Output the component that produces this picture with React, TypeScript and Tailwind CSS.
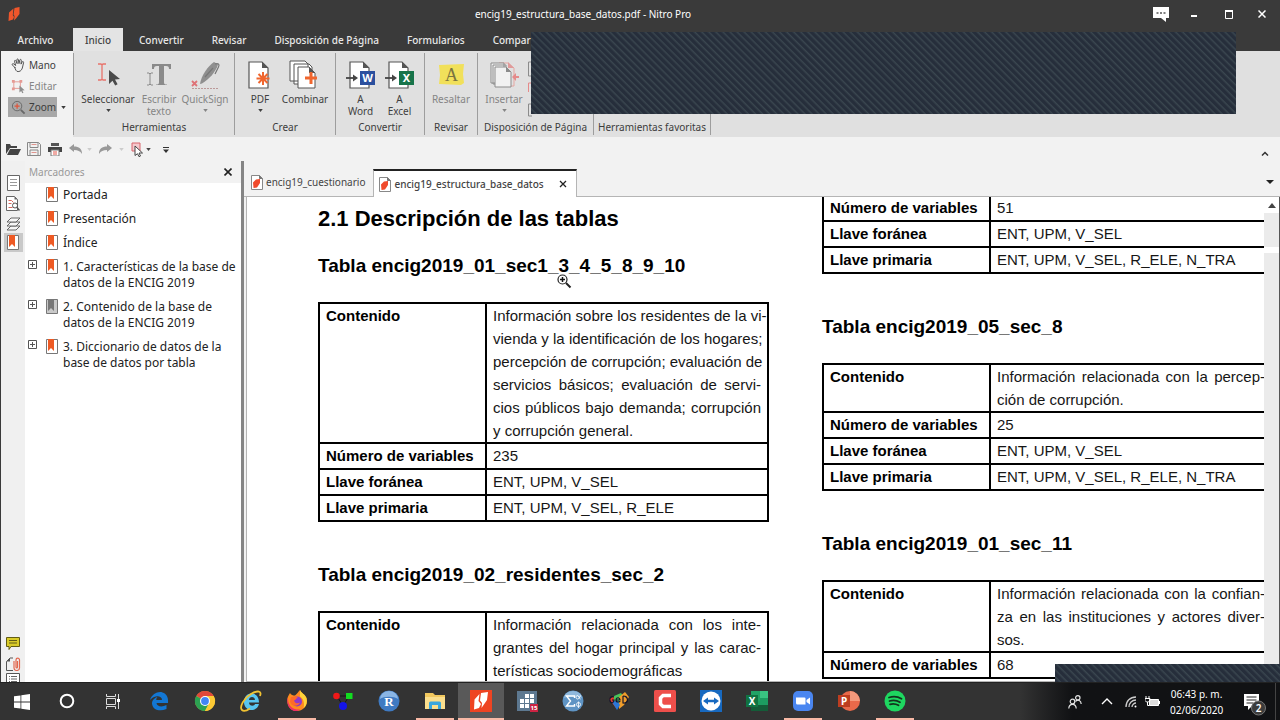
import type { ReactNode } from "react";

const hatch =
  "bg-[#262e3b] bg-[repeating-linear-gradient(45deg,#262e3b_0px,#262e3b_2px,#3a464f_4px,#262e3b_5px)]";

function NitroMark({ className, color = "#f0562b" }: { className?: string; color?: string }) {
  return (
    <svg viewBox="0 0 12 16" className={className} fill={color}>
      <path d="M6.500 2 11.500 1v7L8 12.500 6 14.500 6.500 10 5.500 8.500Z" />
      <path d="M1 6.500 5.500 2.500 4.800 9l1.200 2-1 2.500L.5 15Z" />
    </svg>
  );
}

function Caret({ className = "" }: { className?: string }) {
  return (
    <svg viewBox="0 0 6 4" className={`h-[3px] w-[5px] shrink-0 ${className}`}>
      <path d="M0 0h6L3 4Z" fill="currentColor" />
    </svg>
  );
}

function HandIcon() {
  return (
    <svg viewBox="0 0 16 16" className="h-[15px] w-[15px] shrink-0" fill="none" stroke="#4b4b4b" strokeLinecap="round" strokeLinejoin="round">
      <path d="M4 10 1.500 7.500c-.8-1 .5-2 1.400-1.200L5 8 3.700 3.600c-.3-1.200 1.200-1.600 1.600-.5L6.500 6 6.200 2c0-1.300 1.600-1.300 1.700 0L8.500 6l.9-3.800c.3-1.200 1.800-.8 1.600.4L10.700 6.500l1.200-2.300c.6-1 1.900-.3 1.500.8L12.600 8.500c-.5 3-1.600 6-5 6C5.500 14.500 4.800 12.500 4 10Z" />
    </svg>
  );
}

function EditIcon() {
  return (
    <svg viewBox="0 0 16 16" className="h-[15px] w-[15px] shrink-0" fill="none">
      <path d="M3 3h7v7H3Z" stroke="#e59a94" />
      <path d="M1 1h3v3H1ZM9 1h3v3H9ZM1 9h3v3H1Z" fill="#e59a94" />
      <path d="m9 7 5.500 5-2.500.2 1.300 2.500-1.200.6-1.300-2.500L9 14.500Z" fill="#8d8d8d" />
    </svg>
  );
}

function ZoomIcon() {
  return (
    <svg viewBox="0 0 16 16" className="h-[15px] w-[15px] shrink-0" fill="none">
      <circle cx="6.500" cy="6.500" r="5" stroke="#686868" />
      <path d="M6.500 3.800v5.400M3.800 6.500h5.400" stroke="#e0543a" strokeWidth="1.300" />
      <path d="m10.500 10.500 4 4" stroke="#686868" strokeWidth="2" />
    </svg>
  );
}

function SelectIcon() {
  return (
    <svg viewBox="0 0 32 32" className="h-8 w-8">
      <path d="M6 5h3l1 1 1-1h3M6 21h3l1-1 1 1h3M10 6v14" fill="none" stroke="#e8736b" strokeWidth="1.300" />
      <path d="m17 11 11 9-5 .6 2.600 4.600-2.400 1.300-2.700-4.700L17 25Z" fill="#4a4a4a" />
    </svg>
  );
}

function TypeIcon() {
  return (
    <svg viewBox="0 0 32 32" className="h-8 w-8">
      <path d="M9 5h19v5h-2c0-2-.5-3-3-3h-2v16c0 2 .5 2.500 3 2.500V26H13v-.5c2.500 0 3-.5 3-2.500V7h-2c-2.500 0-3 1-3 3H9Z" fill="#8a8a8a" />
      <path d="M4 14h2l1 1 1-1h2M4 26h2l1-1 1 1h2M7 15v10" fill="none" stroke="#8a8a8a" />
    </svg>
  );
}

function SignIcon() {
  return (
    <svg viewBox="0 0 32 32" className="h-8 w-8">
      <path d="M11 25c1-8 8-18 14-22l4 2.500c-2 7-9 15-16 19Z" fill="#8f8f8f" />
      <path d="M26 5c3-1 5 0 3.500 3L26 15M16 18l8-9" fill="none" stroke="#777" strokeWidth="1.200" />
      <path d="m3 22 5 5m0-5-5 5" stroke="#df7277" strokeWidth="1.800" />
      <path d="M3 29.500h26" stroke="#b99" strokeDasharray="2 1" />
    </svg>
  );
}

function PageShape() {
  return (
    <>
      <path d="M5 3h13l6 6v20H5Z" fill="#fff" stroke="#555" strokeWidth="1.200" />
      <path d="M18 3v6h6Z" fill="#555" />
    </>
  );
}

function PdfIcon() {
  return (
    <svg viewBox="0 0 32 32" className="h-8 w-8">
      <PageShape />
      <path d="M19 13v13M12.500 19.500h13M14.500 15l9 9m0-9-9 9" stroke="#f0662e" strokeWidth="2" />
    </svg>
  );
}

function CombineIcon() {
  return (
    <svg viewBox="0 0 32 32" className="h-8 w-8">
      <path d="M1 2h15l3 3v17H1ZM5 5h15l3 3v17H5Z" fill="#fff" stroke="#555" />
      <path d="M9 8h11l6 6v15H9Z" fill="#fff" stroke="#555" />
      <path d="M20 8v6h6Z" fill="#555" />
      <path d="M22 13v12M16 19h12" stroke="#f0662e" strokeWidth="3" />
    </svg>
  );
}

function ExportIcon({ letter, color }: { letter: string; color: string }) {
  return (
    <svg viewBox="0 0 32 32" className="h-8 w-8 overflow-visible">
      <PageShape />
      <path d="M1 19h10" stroke="#444" strokeWidth="1.800" />
      <path d="m8 15.500 5 3.500-5 3.500Z" fill="#444" />
      <path d="M15 12h15v14H15Z" fill={color} />
      <text x="22.500" y="23" textAnchor="middle" fontFamily="Noto Sans, sans-serif" fontWeight="700" fontSize="11" fill="#fff">
        {letter}
      </text>
    </svg>
  );
}

function HighlightIcon() {
  return (
    <svg viewBox="0 0 32 32" className="h-8 w-8">
      <path d="M4 6 29 5l-1 10 1 9-3 2-22-1 1-9Z" fill="#f1e05a" />
      <text x="16.500" y="22" textAnchor="middle" fontFamily="Liberation Serif, serif" fontSize="18" fill="#7b7440">
        A
      </text>
    </svg>
  );
}

function InsertIcon() {
  return (
    <svg viewBox="0 0 32 32" className="h-8 w-8">
      <path d="M11 4h9l6 5v18h-4" fill="none" stroke="#e5a5a0" />
      <path d="M20 3v6h6Z" fill="#e09a9a" />
      <path d="M3 4h13v20H3ZM5 6h13v19H5Z" fill="#f1f1f1" stroke="#8b8b8b" />
      <path d="M7 8h11l5 5v15H7Z" fill="#f1f1f1" stroke="#8b8b8b" />
      <path d="M18 8v5h5Z" fill="#8b8b8b" />
      <path d="m24 18 4-4v3h3v2h-3v3Z" fill="#e58a8a" />
    </svg>
  );
}

function RibbonButton({ icon, label, second, caret, muted, width }: { icon: ReactNode; label: string; second?: string; caret?: boolean; muted?: boolean; width: string }) {
  return (
    <button type="button" className={`flex flex-col items-center pt-1.5 leading-3 ${width} ${muted ? "text-[#858585]" : "text-[#3f3f3f]"}`}>
      {icon}
      <span className="mt-0.5">{label}</span>
      {second && <span>{second}</span>}
      {caret && <Caret className="mt-1" />}
    </button>
  );
}

function RibbonGroup({ title, width, children }: { title: string; width: string; children?: ReactNode }) {
  return (
    <section className={`flex shrink-0 flex-col justify-between py-0.5 ${width}`}>
      <div className="flex h-[66px] justify-center">{children}</div>
      <h2 className="pb-0.5 text-center leading-3 whitespace-nowrap">{title}</h2>
    </section>
  );
}

function Divider() {
  return <div className="my-0.5 w-px shrink-0 bg-[#9d9d9d]" />;
}

function TitleBar() {
  return (
    <header className="flex h-7 shrink-0 items-center bg-[#3a3a3a] px-2 text-white">
      <div className="flex-1">
        <NitroMark className="h-4 w-3" />
      </div>
      <h1 className="pr-[114px] text-[10px]">encig19_estructura_base_datos.pdf - Nitro Pro</h1>
      <div className="flex flex-1 items-center justify-end">
        <button type="button" aria-label="Comentarios" className="mr-[22px]">
          <svg viewBox="0 0 16 15" className="h-[15px] w-4">
            <path d="M0 0h16v11h-3v4l-5-4H0Z" fill="#fff" />
            <path d="M3.500 6h2m1.500 0h2m1.500 0h2" stroke="#555" strokeWidth="1.500" />
          </svg>
        </button>
        <button type="button" aria-label="Minimizar" className="mr-7">
          <svg viewBox="0 0 6 10" className="h-[10px] w-[6px]"><path d="M0 7h6" stroke="#fff" strokeWidth="2" /></svg>
        </button>
        <button type="button" aria-label="Maximizar" className="mr-[25px]">
          <svg viewBox="0 0 8 9" className="h-[9px] w-2"><path d="M.5 1v7.500h7V1" fill="none" stroke="#fff" /><path d="M0 1h8" stroke="#fff" strokeWidth="2" /></svg>
        </button>
        <button type="button" aria-label="Cerrar" className="mr-[6px]">
          <svg viewBox="0 0 8 8" className="h-2 w-2"><path d="m.5.5 7 7m0-7-7 7" stroke="#fff" strokeWidth="1.500" /></svg>
        </button>
      </div>
    </header>
  );
}

const menus = ["Convertir", "Revisar", "Disposición de Página", "Formularios", "Compar"];

function Menu() {
  return (
    <nav className="flex h-[23px] shrink-0 items-stretch overflow-hidden bg-[#3a3a3a] text-[10px] font-medium whitespace-nowrap text-[#e8e8e8]">
      <button type="button" className="w-[73px] pt-0.5 pr-0.5">Archivo</button>
      <button type="button" className="mr-0.5 w-[50px] bg-[#e4e4e4] pt-0.5 text-[#444]">Inicio</button>
      {menus.map((m) => (
        <button key={m} type="button" className="px-3.5 pt-0.5">{m}</button>
      ))}
    </nav>
  );
}

function Ribbon() {
  return (
    <div className="flex h-[86px] shrink-0 border-l border-[#3a3a3a] bg-[#f2f2f2] text-[10px] text-[#3c3c3c]">
      <div className="flex w-[72px] shrink-0 flex-col items-start gap-px pt-1 pl-[7px]">
        <button type="button" className="flex h-5 items-center gap-[3px] px-[3px]"><HandIcon />Mano</button>
        <button type="button" className="flex h-5 items-center gap-[3px] px-[3px] text-[#858585]"><EditIcon />Editar</button>
        <div className="flex items-center gap-1">
          <button type="button" className="flex h-5 w-[49px] items-center gap-[3px] bg-[#a8a8a8] px-[3px]"><ZoomIcon />Zoom</button>
          <Caret />
        </div>
      </div>
      <div className="flex min-w-0 flex-1 overflow-hidden bg-[#e0e0e0]">
        <Divider />
        <RibbonGroup title="Herramientas" width="w-[160px]">
          <RibbonButton icon={<SelectIcon />} label="Seleccionar" caret width="w-[66px]" />
          <RibbonButton icon={<TypeIcon />} label="Escribir" second="texto" muted width="w-[36px]" />
          <RibbonButton icon={<SignIcon />} label="QuickSign" muted caret width="w-[56px]" />
        </RibbonGroup>
        <Divider />
        <RibbonGroup title="Crear" width="w-[100px]">
          <RibbonButton icon={<PdfIcon />} label="PDF" caret width="w-[40px]" />
          <RibbonButton icon={<CombineIcon />} label="Combinar" width="w-[50px]" />
        </RibbonGroup>
        <Divider />
        <RibbonGroup title="Convertir" width="w-[88px]">
          <RibbonButton icon={<ExportIcon letter="W" color="#2b4f9e" />} label="A" second="Word" width="w-[39px]" />
          <RibbonButton icon={<ExportIcon letter="X" color="#17744a" />} label="A" second="Excel" width="w-[39px]" />
        </RibbonGroup>
        <Divider />
        <RibbonGroup title="Revisar" width="w-[52px]">
          <RibbonButton icon={<HighlightIcon />} label="Resaltar" muted width="w-[50px]" />
        </RibbonGroup>
        <Divider />
        <RibbonGroup title="Disposición de Página" width="w-[115px]">
          <div className="flex flex-1 pl-[6px]">
            <RibbonButton icon={<InsertIcon />} label="Insertar" muted caret width="w-[40px]" />
            <svg viewBox="0 0 8 60" className="mt-1.5 h-[60px] w-2" fill="none">
              <path d="M4.500 3v14H8M4.500 45v12H8M4.500 3H8M4.500 45H8" stroke="#8b8b8b" />
              <path d="M4.500 33v-9H8" stroke="#e58a8a" />
            </svg>
          </div>
        </RibbonGroup>
        <Divider />
        <RibbonGroup title="Herramientas favoritas" width="w-[116px]" />
        <Divider />
      </div>
    </div>
  );
}

function QuickBar() {
  return (
    <div className="flex h-6 shrink-0 items-center border-l border-[#3a3a3a] bg-[#f2f2f2] pl-[5px] text-[#444]">
      <button type="button" aria-label="Abrir" className="mr-[6px]">
        <svg viewBox="0 0 15 12" className="h-3 w-[15px]"><path d="M0 11V1h4l1 2h6v2H4Z" fill="#444" /><path d="M4 6h11l-3 6H1Z" fill="#444" /></svg>
      </button>
      <button type="button" aria-label="Guardar" className="mr-[7px]">
        <svg viewBox="0 0 14 14" className="h-3.5 w-3.5" fill="none"><path d="M.5.5h11l2 2v11H.5Z" stroke="#888" /><path d="M3 .5h8v5H3ZM3 13V8h8v5" stroke="#888" /><path d="M4.500 2.500h5M4.500 10.500h5" stroke="#e0958e" /></svg>
      </button>
      <button type="button" aria-label="Imprimir" className="mr-[7px]">
        <svg viewBox="0 0 14 14" className="h-3.5 w-3.5"><path d="M3 1h8v3H3Z" fill="#555" /><path d="M0 5h14v5H0Z" fill="#444" /><path d="M3 8h8v6H3Z" fill="#fff" stroke="#777" /><path d="M5 10h4M5 12h4" stroke="#e2564a" /></svg>
      </button>
      <button type="button" aria-label="Deshacer" className="mr-[5px] text-[#999]">
        <svg viewBox="0 0 13 10" className="h-2.5 w-[13px]"><path d="m0 4 5-4v2.500c5 0 8 2 8 7.500-2-3-4-4-8-4V8Z" fill="currentColor" /></svg>
      </button>
      <Caret className="mr-[7px] text-[#ccc]" />
      <button type="button" aria-label="Rehacer" className="mr-[7px] text-[#999]">
        <svg viewBox="0 0 13 10" className="h-2.5 w-[13px]"><path d="M13 4 8 0v2.500c-5 0-8 2-8 7.500 2-3 4-4 8-4V8Z" fill="currentColor" /></svg>
      </button>
      <Caret className="mr-[7px] text-[#ccc]" />
      <button type="button" aria-label="Seleccionar" className="mr-[3px]">
        <svg viewBox="0 0 12 15" className="h-[15px] w-3"><path d="M1 1h8v8H1Z" fill="#f5c9cd" stroke="#d8646c" /><path d="m4 4 7.500 7H8l1.500 3-1.500.7-1.500-3L4 13.500Z" fill="#fff" stroke="#444" /></svg>
      </button>
      <Caret className="mr-3" />
      <button type="button" aria-label="Personalizar">
        <svg viewBox="0 0 6 7" className="h-[7px] w-1.5"><path d="M0 1.500h6" stroke="#333" /><path d="M0 3.500h6L3 7Z" fill="#333" /></svg>
      </button>
      <button type="button" aria-label="Contraer la cinta" className="mt-2 mr-[11px] ml-auto">
        <svg viewBox="0 0 8 5" className="h-[5px] w-2"><path d="m1 4.500 3-3 3 3" fill="none" stroke="#333" strokeWidth="1.500" /></svg>
      </button>
    </div>
  );
}

function BookmarkIcon({ gray }: { gray?: boolean }) {
  return (
    <svg viewBox="0 0 12 15" className="h-[15px] w-3 shrink-0">
      <path d="M.5.5h11v14H.5Z" fill={gray ? "#c9c9c9" : "#fff"} stroke="#777" />
      <path d="M2 0h6v12l-3-3-3 3Z" fill={gray ? "#777" : "#ee5a24"} />
    </svg>
  );
}

const bookmarks = [
  { lines: ["Portada"] },
  { lines: ["Presentación"] },
  { lines: ["Índice"] },
  { lines: ["1. Características de la base de", "datos de la ENCIG 2019"], nested: true },
  { lines: ["2. Contenido de la base de", "datos de la ENCIG 2019"], nested: true, gray: true },
  { lines: ["3. Diccionario de datos de la", "base de datos por tabla"], nested: true },
];

function Bookmarks() {
  return (
    <aside className="flex w-[216px] shrink-0 flex-col bg-white">
      <div className="flex h-[22px] items-center justify-between bg-[#f2f2f2] pr-[9px] pl-1">
        <h2 className="text-[10px] text-[#999]">Marcadores</h2>
        <button type="button" aria-label="Cerrar marcadores">
          <svg viewBox="0 0 8 8" className="h-2 w-2"><path d="m.5.5 7 7m0-7-7 7" stroke="#222" strokeWidth="1.600" /></svg>
        </button>
      </div>
      <ul className="flex flex-col gap-2 pt-1 text-[12px] leading-4 text-[#222]">
        {bookmarks.map((b) => (
          <li key={b.lines[0]} className="flex whitespace-nowrap">
            <span className="flex w-[21px] shrink-0 pt-px pl-[3px]">
              {b.nested && (
                <button type="button" aria-label="Expandir" className="self-start">
                  <svg viewBox="0 0 9 9" className="h-[9px] w-[9px]"><path d="M.5.5h8v8h-8ZM2 4.500h5M4.500 2v5" fill="none" stroke="#555" /></svg>
                </button>
              )}
            </span>
            <BookmarkIcon gray={b.gray} />
            <a href="#doc" className="pl-[5px]">
              {b.lines.map((l) => <span key={l} className="block">{l}</span>)}
            </a>
          </li>
        ))}
      </ul>
    </aside>
  );
}

function SideRail() {
  return (
    <div className="flex w-[25px] shrink-0 flex-col items-center overflow-hidden border-l border-[#3a3a3a] bg-[#f0f0f0] pt-[11px]">
      <button type="button" aria-label="Páginas" className="h-[21px]">
        <svg viewBox="0 0 13 16" className="h-4 w-[13px]"><path d="M.5.5h12v15H.5Z" fill="#fff" stroke="#666" /><path d="M3 4.500h7M3 7.500h7M3 10.500h7" stroke="#999" /></svg>
      </button>
      <button type="button" aria-label="Búsqueda" className="h-[21px]">
        <svg viewBox="0 0 14 15" className="h-[15px] w-3.5" fill="none"><path d="M.5.5h8l3 3v11H.5Z" fill="#fff" stroke="#666" /><path d="M8.500.5v3h3Z" fill="#666" /><path d="M2.500 4.500h3l2 2M2.500 7.500h3M2.500 11.500h4" stroke="#d6685e" /><circle cx="9" cy="9.500" r="2.500" stroke="#555" /><path d="m11 11.500 2.500 3" stroke="#555" strokeWidth="1.500" /></svg>
      </button>
      <button type="button" aria-label="Capas" className="h-[19px]">
        <svg viewBox="0 0 15 14" className="h-3.5 w-[15px]" fill="#f7f7f7" stroke="#666" strokeLinejoin="round"><path d="M5 9h9l-4 4H1Z" /><path d="M5 5h9l-4 4H1Z" /><path d="M5 1h9l-4 4H1Z" /></svg>
      </button>
      <button type="button" aria-label="Marcadores" className="flex h-[19px] w-[19px] items-center justify-center bg-[#c9c9c9]">
        <BookmarkIcon />
      </button>
      <button type="button" aria-label="Comentarios" className="mt-auto h-[21px]">
        <svg viewBox="0 0 14 13" className="h-[13px] w-3.5"><path d="M.5.5h13v9H5l-2 3v-3H.5Z" fill="#d9cb28" stroke="#625c14" /><path d="M3 3.500h8M3 6h8" stroke="#625c14" /></svg>
      </button>
      <button type="button" aria-label="Archivos adjuntos" className="h-[19px]">
        <svg viewBox="0 0 15 14" className="h-3.5 w-[15px]" fill="none"><path d="M7 13.500H.5v-9L4 1h3" stroke="#555" /><path d="M4 1v3.500H.5Z" fill="#555" /><path d="M8 4v7c0 3.300 5.500 3.300 5.500 0V3c0-2.500-3.500-2.500-3.500 0v7c0 1.300 1.500 1.300 1.500 0V4" stroke="#e2674e" strokeWidth="1.200" /></svg>
      </button>
      <button type="button" aria-label="Formularios" className="h-[9px] overflow-hidden">
        <svg viewBox="0 0 14 9" className="h-[9px] w-3.5"><path d="M.5 10V.5h13V10" fill="#fff" stroke="#555" /><path d="M3 3.500h1m1 0h6M3 6h1m1 0h6M3 8.500h1m1 0h6" stroke="#666" /></svg>
      </button>
    </div>
  );
}

function FileIcon() {
  return (
    <svg viewBox="0 0 12 15" className="h-[15px] w-3 shrink-0">
      <path d="M.5.5h8l3 3v11H.5Z" fill="#fff" stroke="#888" />
      <path d="M8.500.5v3h3" fill="#777" stroke="#777" />
      <path d="M2 7.500 4.500 5 5 4.500 9 4v4l-3 4.500L2.500 13Z" fill="#f04a2c" />
    </svg>
  );
}

type Row = { label: string; lines: string[] };

function VariableTable({ rows }: { rows: Row[] }) {
  return (
    <table className="w-[451px] table-fixed border-collapse text-[15px] leading-[23px] text-[#161616]">
      <tbody>
        {rows.map((r) => (
          <tr key={r.label} className="align-top">
            <th scope="row" className="h-[26px] w-[167px] border-2 border-black px-1.5 text-left font-bold whitespace-nowrap text-black">{r.label}</th>
            <td className="border-2 border-black px-1.5 whitespace-nowrap">
              {r.lines.map((l, i) => (
                <span key={l} className={i < r.lines.length - 1 ? "block [text-align-last:justify]" : "block"}>{l}</span>
              ))}
            </td>
          </tr>
        ))}
      </tbody>
    </table>
  );
}

function keys(count: string, primary?: string): Row[] {
  const rows = [{ label: "Número de variables", lines: [count] }];
  if (!primary) return rows;
  return [...rows, { label: "Llave foránea", lines: ["ENT, UPM, V_SEL"] }, { label: "Llave primaria", lines: [primary] }];
}

const sec1: Row[] = [
  {
    label: "Contenido",
    lines: [
      "Información sobre los residentes de la vi-",
      "vienda y la identificación de los hogares;",
      "percepción de corrupción; evaluación de",
      "servicios básicos; evaluación de servi-",
      "cios públicos bajo demanda; corrupción",
      "y corrupción general.",
    ],
  },
  ...keys("235", "ENT, UPM, V_SEL, R_ELE"),
];
const sec2: Row[] = [
  { label: "Contenido", lines: ["Información relacionada con los inte-", "grantes del hogar principal y las carac-", "terísticas sociodemográficas"] },
];
const sec8: Row[] = [
  { label: "Contenido", lines: ["Información relacionada con la percep-", "ción de corrupción."] },
  ...keys("25", "ENT, UPM, V_SEL, R_ELE, N_TRA"),
];
const sec11: Row[] = [
  { label: "Contenido", lines: ["Información relacionada con la confian-", "za en las instituciones y actores diver-", "sos."] },
  ...keys("68"),
];

function Heading({ children, first }: { children: ReactNode; first?: boolean }) {
  return <h3 className={`mb-6 text-[19px] leading-6 font-bold whitespace-nowrap ${first ? "mt-[22px]" : "mt-[41px]"}`}>{children}</h3>;
}

function Viewer() {
  return (
    <main className="flex min-w-0 flex-1 flex-col border-l-3 border-[#858585] bg-[#f2f2f2]">
      <div className="flex h-9 shrink-0 items-end border-b border-[#b5b5b5] pl-[7px] text-[10px] text-[#444]">
        <button type="button" className="flex h-7 items-center gap-[3px] pr-2"><FileIcon />encig19_cuestionario</button>
        <div className="-mb-px flex h-7 items-center border-x border-t-2 border-x-[#b5b5b5] border-t-[#222] bg-white px-[5px]">
          <button type="button" className="flex items-center gap-[3px] font-medium"><FileIcon />encig19_estructura_base_datos</button>
          <button type="button" aria-label="Cerrar pestaña" className="mr-1 ml-[15px]">
            <svg viewBox="0 0 8 8" className="h-2 w-2"><path d="m1 1 6 6m0-6-6 6" stroke="#222" strokeWidth="1.300" /></svg>
          </button>
        </div>
        <button type="button" aria-label="Lista de pestañas" className="mr-[6px] mb-[12px] ml-auto">
          <svg viewBox="0 0 8 4" className="h-1 w-2"><path d="M0 0h8L4 4Z" fill="#222" /></svg>
        </button>
      </div>
      <div className="ml-0.5 flex min-h-0 flex-1 border-l border-[#b5b5b5]">
        <div id="doc" className="flex min-w-0 flex-1 gap-[53px] overflow-hidden border-b border-[#b5b5b5] bg-white pl-[71px] font-['Liberation_Sans',Arial,sans-serif] text-black">
          <article className="shrink-0 pt-[9px]">
            <h2 className="text-[22px] leading-[26px] font-bold">2.1 Descripción de las tablas</h2>
            <Heading first>Tabla encig2019_01_sec1_3_4_5_8_9_10</Heading>
            <VariableTable rows={sec1} />
            <Heading>Tabla encig2019_02_residentes_sec_2</Heading>
            <VariableTable rows={sec2} />
          </article>
          <article className="-mt-[3px] shrink-0">
            <VariableTable rows={keys("51", "ENT, UPM, V_SEL, R_ELE, N_TRA")} />
            <Heading>Tabla encig2019_05_sec_8</Heading>
            <VariableTable rows={sec8} />
            <Heading>Tabla encig2019_01_sec_11</Heading>
            <VariableTable rows={sec11} />
          </article>
        </div>
        <div className="flex w-4 shrink-0 flex-col border-r border-[#555] bg-[#ebebeb]">
          <button type="button" aria-label="Subir" className="flex h-4 items-center justify-center bg-white">
            <svg viewBox="0 0 8 5" className="h-[5px] w-2"><path d="M4 0 8 5H0Z" fill="#444" /></svg>
          </button>
          <div className="mt-[34px] h-[6px] bg-white" />
        </div>
      </div>
    </main>
  );
}

function Start() {
  return <svg viewBox="0 0 16 16" className="h-4 w-4" fill="#fff"><path d="m0 2.300 6.500-.9v6.200H0ZM7.300 1.300 16 0v7.600H7.300ZM0 8.400h6.500v6.200L0 13.700ZM7.300 8.400H16V16l-8.700-1.200Z" /></svg>;
}

function Cortana() {
  return <svg viewBox="0 0 16 16" className="h-4 w-4"><circle cx="8" cy="8" r="6.300" fill="none" stroke="#fff" strokeWidth="2" /></svg>;
}

function TaskView() {
  return <svg viewBox="0 0 16 16" className="h-4 w-4" fill="none" stroke="#ddd"><path d="M1.500 5.500h9v6h-9ZM1.500 1v2.500h9V1M1.500 16v-2.500h9V16M13.500 1v15" /><path d="M12 6h3v3h-3Z" fill="#fff" stroke="none" /></svg>;
}

function Edge() {
  return (
    <svg viewBox="0 0 20 20" className="h-5 w-5">
      <path d="M1 9C3 3 9 0 13.500 1.500 18 3 19.500 7 19 12H7.500c.3 3.500 5.500 4.500 10 2v4C11 21 3.500 19 3 12.500 3 9 6 6.800 8.500 6 7.500 7 7.300 8 7.300 9H13c0-3-2.500-4-5-3.800C5 5.400 2.500 7 1 9Z" fill="#1377d4" />
    </svg>
  );
}

function Chrome() {
  return (
    <svg viewBox="0 0 22 22" className="h-[22px] w-[22px]">
      <circle cx="11" cy="11" r="10" fill="#fcc934" />
      <path d="M11 11 2.300 6A10 10 0 0 1 19.700 6Z" fill="#e0483a" />
      <path d="M2.300 6A10 10 0 0 0 11 21l4-8-4-2Z" fill="#2ca152" />
      <path d="M11 6h8.700A10 10 0 0 1 11 21l4.300-7.500Z" fill="#fcc934" />
      <circle cx="11" cy="11" r="5" fill="#fff" />
      <circle cx="11" cy="11" r="3.900" fill="#4285f4" />
    </svg>
  );
}

function Explorer() {
  return (
    <svg viewBox="0 0 22 22" className="h-[22px] w-[22px]" fill="none">
      <path d="M4 12C4 6 8 3.500 11.500 3.500S19 6 19 12.500H9c0 4 5.500 4 6 1.500h4c-1 4-4 6-7.500 6S4 17.500 4 12Zm5-2h6c0-4-6-4-6 0Z" fill="#58c5f0" fillRule="evenodd" />
      <path d="M2 20C-1 17 4 8 11 4s11-3 9 2M2 20c1.500 1.500 5 .5 8-1.500" stroke="#f1c232" strokeWidth="1.800" />
    </svg>
  );
}

function Firefox() {
  return (
    <svg viewBox="0 0 22 22" className="h-[22px] w-[22px]">
      <path d="M4 3c1 2 3 2.500 5 2.500C11 4 12 2 14 0c1 3 5 4 6.500 8 2 7-3 13-9.500 13S0 15 1.500 8C2 6 3 5 4 3Z" fill="#ff8a1e" />
      <path d="M14 0c1 3 5 4 6.500 8 1 4 0 8-3 10.500 1-4 1-9-3.500-12Z" fill="#ffd43a" />
      <path d="M2 9c0 8 6 11 12 10.500C8 24 0 18 1.500 8Z" fill="#ed2f68" />
      <circle cx="11" cy="11.500" r="5" fill="#9239c8" />
      <path d="M5 7c3 0 4-1.500 7 1-2 0-2 2-4 2.500 1 3 4 3.500 6 2-2 5-9 4-10-1Z" fill="#ff6a2a" />
    </svg>
  );
}

function Nodes() {
  return <svg viewBox="0 0 22 20" className="h-5 w-[22px]"><path d="M5 5h12l-6 10Z" fill="none" stroke="#151515" /><circle cx="4.500" cy="5" r="3.300" fill="#f01818" /><path d="M14 2h6.500v6H14Z" fill="#12dc20" /><circle cx="11" cy="15" r="4" fill="#1414e8" /></svg>;
}

function RStat() {
  return (
    <svg viewBox="0 0 22 22" className="h-[22px] w-[22px] overflow-visible">
      <circle cx="11" cy="11" r="10.500" fill="#3f7ac2" />
      <path d="M2 9a9 8 0 0 1 18 0c-4-3-14-3-18 0Z" fill="#8ab5e4" />
      <text x="11" y="15.500" textAnchor="middle" fontFamily="Liberation Serif, serif" fontWeight="700" fontSize="13" fill="#fff">R</text>
    </svg>
  );
}

function Folder() {
  return <svg viewBox="0 0 22 20" className="h-5 w-[22px]"><path d="M1 2h8l2 2h10v14H1Z" fill="#f2c85e" /><path d="M1 6h20v12H1Z" fill="#fbdf8d" /><path d="M5 18v-6q0-1.500 1.500-1.500h9q1.500 0 1.500 1.500v6h-3v-4H8v4Z" fill="#39a6dd" /></svg>;
}

function NitroTile() {
  return (
    <svg viewBox="0 0 22 22" className="h-[22px] w-[22px]">
      <path d="M0 0h22v22H0Z" fill="#ee4422" />
      <path d="m11 3 7-1-1 8-5.500 8 .5-5-2-2.500Z" fill="#fff" />
      <path d="m4.500 9.500 5-5.500-1 7 2.500 3-2 4-5 1.500Z" fill="#fff" />
    </svg>
  );
}

function Calc() {
  return (
    <svg viewBox="0 0 21 21" className="h-[21px] w-[21px] overflow-visible">
      <path d="M0 0h20v20H0Z" fill="#5d7890" />
      <path d="M8 3h4v4H8ZM13 3h4v4h-4ZM3 8h4v4H3ZM8 8h4v4H8ZM13 8h4v4h-4ZM3 13h4v4H3ZM8 13h4v4H8Z" fill="#fff" />
      <path d="M13 13h8v8h-8Z" fill="#cc2343" />
      <text x="17" y="19" textAnchor="middle" fontFamily="Noto Sans, sans-serif" fontSize="6" fontWeight="700" fill="#fff">15</text>
    </svg>
  );
}

function Sigma() {
  return (
    <svg viewBox="0 0 22 22" className="h-[22px] w-[22px]">
      <circle cx="11" cy="11" r="10.500" fill="#5f94c4" />
      <path d="M2 8a9 7 0 0 1 18 0c-5-2-13-2-18 0Z" fill="#8fb8dc" />
      <path d="M12.500 8V6H4.500l4 5-4 5h8v-2" fill="none" stroke="#fff" strokeWidth="1.400" />
      <path d="M18.500 5.500c-1 2.500-2 3.500-3 3.500-2 0-2-3.500 0-3.500 1.500 0 1.500 3.500 3 3.500" fill="none" stroke="#fff" strokeWidth=".9" />
      <circle cx="16.500" cy="14.500" r="2" fill="none" stroke="#fff" strokeWidth=".8" />
      <path d="M16.500 11.500v6.500" stroke="#fff" strokeWidth=".8" />
    </svg>
  );
}

function GeoDa() {
  return (
    <svg viewBox="0 0 22 20" className="h-5 w-[22px]">
      <path d="m1 8 6-3 3 4-2 8Z" fill="#e33b2c" />
      <path d="m6 5 7-3 3 4-4 9-6-1Z" fill="#48c45b" />
      <path d="m11 6 6-5 4 5-5 8-5 4Z" fill="#ef9d2b" />
      <path d="m4 11 5-2 3 5-3 5Z" fill="#2c77d8" />
      <path d="M6 6C3 5 1 7 2 10s4 2 4-1H4M8 9h4c0-3-4-3-4 0s4 2 4 1M15 5v7c6 1 6-7 0-7" fill="none" stroke="#16162b" strokeWidth="1.200" />
    </svg>
  );
}

function Camtasia() {
  return <svg viewBox="0 0 22 22" className="h-[22px] w-[22px]"><rect width="22" height="22" rx="1.500" fill="#ee4f4b" /><path d="M17 5.500H9L6.500 8v6L9 16.500h8" fill="none" stroke="#fff" strokeWidth="3.500" /></svg>;
}

function TeamViewer() {
  return <svg viewBox="0 0 22 22" className="h-[22px] w-[22px]"><path d="M0 0h22v22H0Z" fill="#1769c0" /><circle cx="11" cy="11" r="9.500" fill="#fff" /><path d="m3 11 5-3.500v2.300h6V7.500l5 3.500-5 3.500v-2.300H8v2.300Z" fill="#1769c0" /></svg>;
}

function Office({ letter, round }: { letter: string; round?: boolean }) {
  return (
    <svg viewBox="0 0 22 20" className="h-5 w-[22px]">
      {round ? (
        <>
          <circle cx="12" cy="10" r="10" fill="#e9694a" />
          <path d="M12 0a10 10 0 0 1 10 10H12Z" fill="#f59a7c" />
        </>
      ) : (
        <>
          <path d="M5 0h17v20H5Z" fill="#1d9d61" />
          <path d="M5 0h9v10H5Z" fill="#21a366" />
          <path d="M14 0h8v7h-8Z" fill="#39c481" />
          <path d="M5 14h17v6H5Z" fill="#145c38" />
        </>
      )}
      <path d="M0 4h12v12H0Z" fill={round ? "#bd3d20" : "#107342"} />
      <text x="6" y="14" textAnchor="middle" fontFamily="Noto Sans, sans-serif" fontWeight="700" fontSize="10" fill="#fff">{letter}</text>
    </svg>
  );
}

function ZoomApp() {
  return <svg viewBox="0 0 22 22" className="h-[22px] w-[22px]"><rect x="1" y="1" width="20" height="20" rx="5" fill="#4a86f0" /><path d="M4 7.500h8.500q1 0 1 1v6H5.500Q4 14.500 4 13ZM14.500 10l3.500-2.500v7L14.500 12Z" fill="#fff" /></svg>;
}

function Spotify() {
  return <svg viewBox="0 0 22 22" className="h-[22px] w-[22px]"><circle cx="11" cy="11" r="10.500" fill="#1ed760" /><path d="M5 7.500c4-1.200 9-.8 12.500 1.200M5.500 11c3.500-1 7.500-.6 10.500 1.200M6 14.300c3-.8 6-.4 8.500 1" fill="none" stroke="#12331d" strokeWidth="1.800" strokeLinecap="round" /></svg>;
}

const apps: { name: string; icon: ReactNode; open?: boolean; active?: boolean }[] = [
  { name: "Cortana", icon: <Cortana /> },
  { name: "Vista de tareas", icon: <TaskView /> },
  { name: "Edge", icon: <Edge /> },
  { name: "Chrome", icon: <Chrome /> },
  { name: "Internet Explorer", icon: <Explorer /> },
  { name: "Firefox", icon: <Firefox />, open: true },
  { name: "Nodos", icon: <Nodes /> },
  { name: "R", icon: <RStat /> },
  { name: "Explorador", icon: <Folder />, open: true },
  { name: "Nitro Pro", icon: <NitroTile />, active: true },
  { name: "Calculadora", icon: <Calc /> },
  { name: "SPSS", icon: <Sigma /> },
  { name: "GeoDa", icon: <GeoDa /> },
  { name: "Camtasia", icon: <Camtasia /> },
  { name: "TeamViewer", icon: <TeamViewer /> },
  { name: "Excel", icon: <Office letter="X" /> },
  { name: "Zoom", icon: <ZoomApp />, open: true },
  { name: "PowerPoint", icon: <Office letter="P" round /> },
  { name: "Spotify", icon: <Spotify />, open: true },
];

function Taskbar() {
  return (
    <footer className="flex h-[38px] shrink-0 justify-between border-t border-[#222] bg-[#333]">
      <div className="flex">
        <button type="button" aria-label="Inicio" className="flex w-[44px] items-center justify-center"><Start /></button>
        {apps.map((a) => (
          <button key={a.name} type="button" aria-label={a.name} className={`flex w-[46px] flex-col items-center ${a.active ? "bg-[#595959]" : ""}`}>
            <span className="flex flex-1 items-center pt-px">{a.icon}</span>
            <span className={`h-0.5 ${a.active ? "w-full bg-[#f8b9a6]" : a.open ? "w-[38px] bg-[#f8b9a6]" : "w-0"}`} />
          </button>
        ))}
      </div>
      <div className="flex w-[260px] items-center bg-linear-to-r from-[#333] to-[#111214] to-20% pl-12 text-white">
        <button type="button" aria-label="Contactos" className="mr-[19px]">
          <svg viewBox="0 0 14 14" className="h-3.5 w-3.5" fill="none" stroke="#e5e5e5" strokeWidth="1.200"><circle cx="4.500" cy="6.500" r="2.300" /><path d="M.8 13.500C1 8 8 8 8.200 13.500" /><circle cx="9.800" cy="2.800" r="2.200" /><path d="M7.500 6.500c2.500-2.500 5.500-1 5.700 2.500" /></svg>
        </button>
        <button type="button" aria-label="Iconos ocultos" className="mr-3">
          <svg viewBox="0 0 12 7" className="h-[7px] w-3"><path d="m1 6 5-5 5 5" fill="none" stroke="#fff" strokeWidth="1.400" /></svg>
        </button>
        <button type="button" aria-label="Wi-Fi" className="mr-2">
          <svg viewBox="0 0 12 12" className="h-3 w-3" fill="none" stroke="#ccc"><path d="M1 11C1 5 5 1 11 1M4 11c0-4 3-7 7-7M7 11c0-2 2-4 4-4" strokeWidth="1.300" /><circle cx="10.500" cy="10.500" r="1" fill="#fff" stroke="none" /></svg>
        </button>
        <button type="button" aria-label="Batería" className="mr-[10px]">
          <svg viewBox="0 0 15 11" className="h-[11px] w-[15px]" fill="none"><path d="M4.500 3.500h9v6h-9Z" fill="#ddd" stroke="#fff" /><path d="M14.500 5v3M1 0v2m3-2v2M0 2.500h5v2L3.500 6h-2L0 4.500ZM2.500 6v3.500h2" stroke="#fff" /></svg>
        </button>
        <time className="text-center text-[10px] leading-4 whitespace-nowrap">
          <span className="block">06:43 p. m.</span>
          <span className="block">02/06/2020</span>
        </time>
        <button type="button" aria-label="Notificaciones" className="mr-2 ml-auto pt-1">
          <svg viewBox="0 0 24 24" className="h-6 w-6">
            <path d="M1 2h15v12H9l-4 4v-4H1Z" fill="#fff" />
            <path d="M3.500 5h10M3.500 8h10M3.500 11h7" stroke="#222" />
            <circle cx="15.500" cy="16" r="7" fill="#3c3c3c" stroke="#777" />
            <text x="15.500" y="19.500" textAnchor="middle" fontFamily="Noto Sans, sans-serif" fontSize="10" fontWeight="600" fill="#fff">2</text>
          </svg>
        </button>
        <div className="mr-1 h-full w-px bg-[#444]" />
      </div>
    </footer>
  );
}

export default function App() {
  return (
    <div className="relative flex h-screen flex-col overflow-hidden bg-[#f2f2f2] font-['Noto_Sans',sans-serif]">
      <TitleBar />
      <Menu />
      <Ribbon />
      <QuickBar />
      <div className="flex min-h-0 flex-1">
        <SideRail />
        <Bookmarks />
        <Viewer />
      </div>
      <Taskbar />
      <div className={`absolute top-8 right-11 left-[531px] h-[82px] ${hatch}`} />
      <div className={`absolute right-0 bottom-[38px] h-[18px] w-[225px] ${hatch}`} />
      <svg viewBox="0 0 16 16" className="absolute top-[273px] left-[556px] h-4 w-4" fill="none">
        <circle cx="6.500" cy="6.500" r="4.500" fill="#fff" stroke="#222" strokeWidth="1.200" />
        <path d="M6.500 4v5M4 6.500h5" stroke="#111" strokeWidth="1.500" />
        <path d="m10 10 4.500 4.500" stroke="#222" strokeWidth="2" />
      </svg>
    </div>
  );
}
